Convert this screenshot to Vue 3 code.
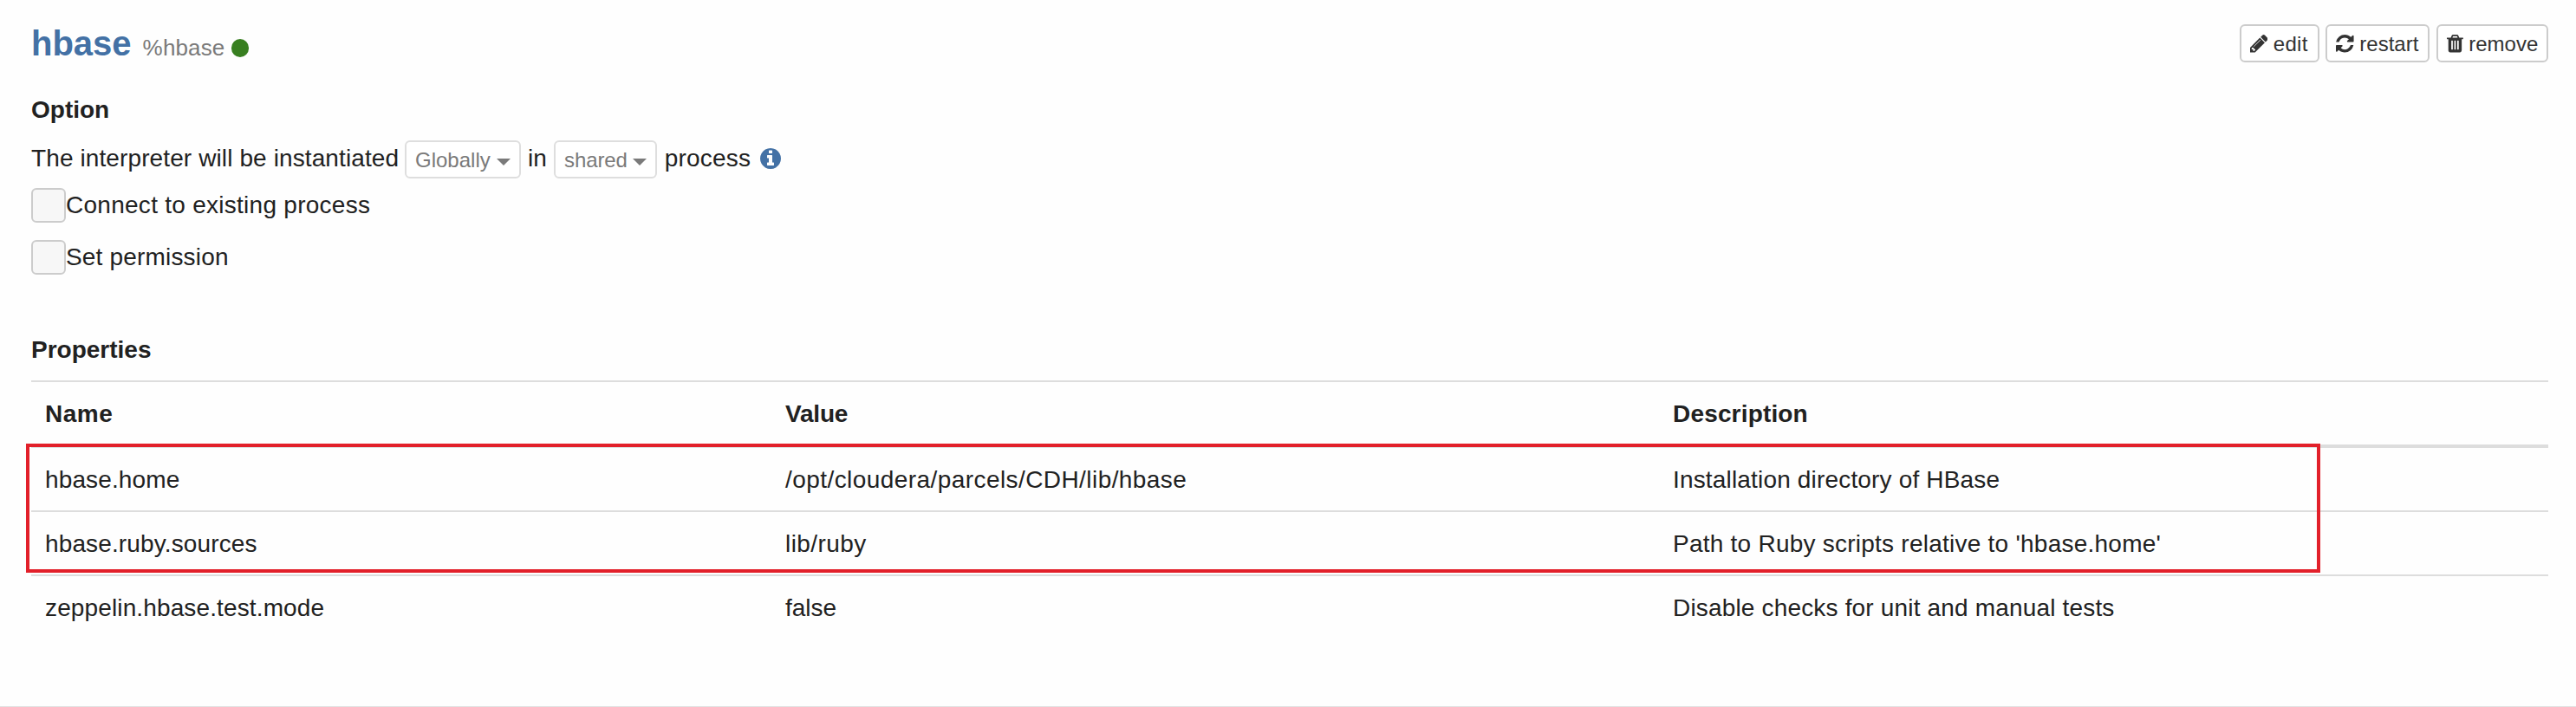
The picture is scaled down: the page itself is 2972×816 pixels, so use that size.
<script setup>
const icons = {
  edit: {
    box: '128 149 1515 1515',
    d: 'M491 1536l91-91-235-235-91 91v107h128v128h107zm523-928q0-22-22-22-10 0-17 7l-542 542q-7 7-7 17 0 22 22 22 10 0 17-7l542-542q7-7 7-17zm-54-192l416 416-832 832h-416v-416zm683 96q0 53-37 90l-166 166-416-416 166-165q36-38 90-38 53 0 91 38l235 234q37 39 37 91z',
  },
  restart: {
    box: '128 128 1536 1536',
    d: 'M1639 1056q0 5-1 7-64 268-268 434.5t-478 166.5q-146 0-282.5-55t-243.5-157l-129 129q-19 19-45 19t-45-19-19-45v-448q0-26 19-45t45-19h448q26 0 45 19t19 45-19 45l-137 137q71 66 161 102t187 36q134 0 250-65t186-179q11-17 53-117 8-23 30-23h192q13 0 22.5 9.5t9.5 22.5zm25-800v448q0 26-19 45t-45 19h-448q-26 0-45-19t-19-45 19-45l138-138q-148-137-349-137-134 0-250 65t-186 179q-11 17-53 117-8 23-30 23h-199q-13 0-22.5-9.5t-9.5-22.5v-7q65-268 270-434.5t480-166.5q146 0 284 55.5t245 156.5l130-129q19-19 45-19t45 19 19 45z',
  },
  remove: {
    box: '192 128 1408 1536',
    d: 'M704 1376v-704q0-14-9-23t-23-9h-64q-14 0-23 9t-9 23v704q0 14 9 23t23 9h64q14 0 23-9t9-23zm256 0v-704q0-14-9-23t-23-9h-64q-14 0-23 9t-9 23v704q0 14 9 23t23 9h64q14 0 23-9t9-23zm256 0v-704q0-14-9-23t-23-9h-64q-14 0-23 9t-9 23v704q0 14 9 23t23 9h64q14 0 23-9t9-23zm-544-992h448l-48-117q-7-9-17-11h-317q-10 2-17 11zm928 32v64q0 14-9 23t-23 9h-96v948q0 83-47 143.5t-113 60.5h-832q-66 0-113-58.5t-47-141.5v-952h-96q-14 0-23-9t-9-23v-64q0-14 9-23t23-9h309l70-167q15-37 54-63t79-26h320q40 0 79 26t54 63l70 167h309q14 0 23 9t9 23z',
  },
}
const actions = ['edit', 'restart', 'remove']
const checks = [
  { label: 'Connect to existing process', cls: 'connect' },
  { label: 'Set permission', cls: 'permission' },
]
const rows = [
  { name: 'hbase.home', value: '/opt/cloudera/parcels/CDH/lib/hbase', desc: 'Installation directory of HBase' },
  { name: 'hbase.ruby.sources', value: 'lib/ruby', desc: "Path to Ruby scripts relative to 'hbase.home'" },
  { name: 'zeppelin.hbase.test.mode', value: 'false', desc: 'Disable checks for unit and manual tests' },
]
</script>

<template>
  <main class="interpreter">
    <header class="head">
      <div class="title">
        <h3>hbase</h3>
        <small>%hbase</small>
        <i class="status"></i>
      </div>
      <div class="actions">
        <button v-for="a in actions" :key="a" type="button" class="btn" :class="a">
          <svg :viewBox="icons[a].box"><path :d="icons[a].d" /></svg>
          <span>{{ a }}</span>
        </button>
      </div>
    </header>

    <h5 class="option-title">Option</h5>
    <div class="mode">
      <span class="sentence">The interpreter will be instantiated</span>
      <button type="button" class="select globally"><span>Globally</span><i class="caret"></i></button>
      <span class="in">in</span>
      <button type="button" class="select shared"><span>shared</span><i class="caret"></i></button>
      <span class="process">process</span>
      <svg class="info" viewBox="128 128 1536 1536"><path d="M1152 1376v-160q0-14-9-23t-23-9h-96v-512q0-14-9-23t-23-9h-320q-14 0-23 9t-9 23v160q0 14 9 23t23 9h96v320h-96q-14 0-23 9t-9 23v160q0 14 9 23t23 9h448q14 0 23-9t9-23zm-128-896v-160q0-14-9-23t-23-9h-192q-14 0-23 9t-9 23v160q0 14 9 23t23 9h192q14 0 23-9t9-23zm640 416q0 209-103 385.5t-279.5 279.5-385.5 103-385.5-103-279.5-279.5-103-385.5 103-385.5 279.5-279.5 385.5-103 385.5 103 279.5 279.5 103 385.5z" /></svg>
    </div>
    <div class="checks">
      <label v-for="c in checks" :key="c.cls" class="check" :class="c.cls">
        <i class="box"></i><span>{{ c.label }}</span>
      </label>
    </div>

    <h5 class="properties-title">Properties</h5>
    <section class="table">
      <div class="row thead">
        <span class="name">Name</span><span class="value">Value</span><span class="desc">Description</span>
      </div>
      <div v-for="(r, i) in rows" :key="r.name" class="row" :class="'row-' + i">
        <span class="name">{{ r.name }}</span><span class="value">{{ r.value }}</span><span class="desc">{{ r.desc }}</span>
      </div>
      <div class="highlight"></div>
    </section>
  </main>
</template>

<style>
html,
body {
  margin: 0;
  background: #fefefe;
}
</style>

<style scoped>
.interpreter {
  box-sizing: border-box;
  height: 816px;
  padding: 28px 32px 0 36px;
  border-bottom: 1px solid #e2e2e2;
  font: 28px/40px "Liberation Sans", Arial, sans-serif;
  color: #212121;
  overflow: hidden;
  white-space: nowrap;
}
h3,
h5 {
  margin: 0;
  font-weight: bold;
}
h5 {
  font-size: 28px;
  line-height: 42px;
}
.head {
  display: flex;
  justify-content: space-between;
  height: 44px;
}
.title {
  display: flex;
  align-items: baseline;
  height: 44px;
}
h3 {
  font-size: 40px;
  line-height: 44px;
  color: #4371a5;
}
small {
  margin-left: 13px;
  font-size: 26px;
  line-height: 44px;
  letter-spacing: 0.15px;
  color: #7a7a7a;
}
.status {
  align-self: flex-start;
  width: 20.5px;
  height: 20.5px;
  margin: 17.2px 0 0 7.4px;
  border-radius: 50%;
  background: #387f20;
}
.actions {
  display: flex;
  gap: 7.6px;
}
button {
  box-sizing: border-box;
  display: flex;
  height: 44px;
  border: 2px solid #ccc;
  border-radius: 6px;
  background: #fff;
  font: 24px/36px "Liberation Sans", Arial, sans-serif;
}
.btn {
  padding: 3px 10px 0;
  color: #333;
}
.btn svg {
  flex: none;
  width: 20.57px;
  height: 20.57px;
  margin: 7.4px 6.4px 0 0;
  fill: #333;
}
.btn.remove svg {
  width: 18.86px;
}
.edit {
  width: 92px;
}
.edit span {
  letter-spacing: 0.3px;
}
.restart {
  width: 120px;
}
.remove {
  width: 129px;
}
.option-title {
  margin-top: 34px;
}
.mode {
  display: flex;
  align-items: flex-start;
  height: 44px;
  margin-top: 14px;
  line-height: 42px;
}
.sentence {
  width: 431px;
  letter-spacing: 0.11px;
}
.select {
  justify-content: space-between;
  padding: 3px 10px 0;
  border-color: #dedede;
  color: #7a7a7a;
}
.globally {
  width: 134px;
}
.shared {
  width: 119px;
  letter-spacing: -0.1px;
}
.caret {
  width: 0;
  height: 0;
  margin-top: 16px;
  border: 8px solid transparent;
  border-top-color: #7a7a7a;
  border-bottom: 0;
}
.in {
  box-sizing: border-box;
  width: 38px;
  padding-left: 8px;
}
.process {
  box-sizing: border-box;
  width: 119px;
  padding-left: 8.7px;
  letter-spacing: 0.2px;
}
.info {
  width: 24px;
  height: 24px;
  margin-top: 9px;
  fill: #4371a5;
}
.checks {
  display: flex;
  flex-direction: column;
  gap: 20px;
  margin-top: 11px;
}
.check {
  display: flex;
  height: 40px;
}
.connect {
  letter-spacing: 0.27px;
}
.permission {
  letter-spacing: 0.18px;
}
.box {
  box-sizing: border-box;
  width: 40px;
  height: 40px;
  border: 2px solid #ccc;
  border-radius: 6px;
  background: #f7f7f7;
}
.properties-title {
  margin-top: 66px;
}
.table {
  position: relative;
  margin-top: 14px;
}
.row {
  display: grid;
  grid-template-columns: 854px 1024px 1fr;
  padding: 17px 0 15px;
  border-top: 2px solid #ddd;
}
.row span {
  padding-left: 16px;
}
.name {
  letter-spacing: 0.13px;
}
.desc {
  letter-spacing: 0.17px;
}
.thead {
  border-bottom: 4px solid #ddd;
  font-weight: bold;
}
.thead .name {
  letter-spacing: 0.5px;
}
.thead .value {
  letter-spacing: -0.2px;
}
.row-0 {
  border-top: 0;
}
.row-0 .value,
.row-1 .value {
  letter-spacing: 0.43px;
}
.row-1 .desc {
  letter-spacing: 0.24px;
}
.highlight {
  position: absolute;
  box-sizing: border-box;
  top: 73px;
  left: -6px;
  width: 2647px;
  height: 149px;
  border: 4px solid #e2202a;
}
</style>
